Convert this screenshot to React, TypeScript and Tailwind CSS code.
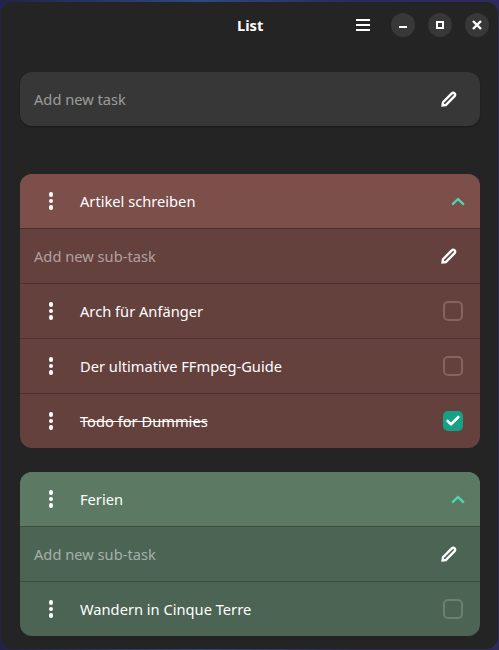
import { Check } from 'lucide-react';

const Dots = () => (
  <div className="flex w-[60px] shrink-0 flex-col items-center gap-[2px] pl-[2px]">
    <span className="h-[4.5px] w-[4.5px] rounded-full bg-white" />
    <span className="h-[4.5px] w-[4.5px] rounded-full bg-white" />
    <span className="h-[4.5px] w-[4.5px] rounded-full bg-white" />
  </div>
);

const Pencil = () => (
  <svg width="16" height="16" viewBox="0 0 16 16" className="text-white">
    <path d="M1.6 14.4 L2 11.2 L10.8 2.4 A1.9 1.9 0 0 1 13.6 5.2 L4.8 14 Z" fill="none" stroke="currentColor" strokeWidth="2.4" strokeLinejoin="miter" />
  </svg>
);

const Chevron = () => (
  <svg width="14" height="9" viewBox="0 0 14 9" className="text-[#4fd8b6]">
    <path d="M1.2 7.6 L7 2 L12.8 7.6" fill="none" stroke="currentColor" strokeWidth="2.2" />
  </svg>
);

const WinButton = ({ children }: { children: React.ReactNode }) => (
  <div className="flex h-6 w-6 items-center justify-center rounded-full bg-[#383838] text-white">{children}</div>
);

const AddRow = ({ border }: { border: string }) => (
  <div className={`flex h-[55px] items-center justify-between border-b pl-[14px] pr-[23px] ${border}`}>
    <span className="text-[14.67px] text-white/50">Add new sub-task</span>
    <Pencil />
  </div>
);

type Task = { title: string; done?: boolean };

const TaskRow = ({ task, border, box, last }: { task: Task; border: string; box: string; last: boolean }) => (
  <div className={last ? 'flex h-[54px] items-center pr-[17px]' : `flex h-[55px] items-center border-b pr-[17px] ${border}`}>
    <Dots />
    <span className={`flex-1 text-[14.67px] text-white ${task.done ? 'line-through' : ''}`}>{task.title}</span>
    {task.done ? (
      <div className="flex h-5 w-5 items-center justify-center rounded-[5px] bg-[#16a085]">
        <Check size={16} strokeWidth={4} className="text-white" />
      </div>
    ) : (
      <div className={`h-5 w-5 rounded-[5px] border-2 ${box}`} />
    )}
  </div>
);

const Group = ({ title, tasks, head, body, border, box }: { title: string; tasks: Task[]; head: string; body: string; border: string; box: string }) => (
  <section className={`overflow-hidden rounded-xl ${body}`}>
    <div className={`flex h-[55px] items-center border-b pr-[15px] ${head} ${border}`}>
      <Dots />
      <span className="flex-1 text-[14.67px] text-white">{title}</span>
      <Chevron />
    </div>
    <AddRow border={border} />
    {tasks.map((task, i) => (
      <TaskRow key={task.title} task={task} border={border} box={box} last={i === tasks.length - 1} />
    ))}
  </section>
);

export default function App() {
  return (
    <div className="h-[650px] w-[499px] overflow-hidden bg-[linear-gradient(90deg,#23224a_0%,#2a4a82_40%,#2b2a5c_70%,#2f2a5e_100%)] pl-[1px] pt-[2px] font-['Noto_Sans',sans-serif]">
      <div className="h-[647px] w-[497px] rounded-[12px] bg-[#242424]">
        <header className="flex h-[45px] items-center pl-[236px] pr-[9px]">
          <h1 className="flex-1 text-[14.67px] font-bold text-white">List</h1>
          <div className="mr-[21px] flex w-[14px] flex-col gap-[3px]">
            <span className="h-[2px] bg-white" />
            <span className="h-[2px] bg-white" />
            <span className="h-[2px] bg-white" />
          </div>
          <div className="flex gap-[13px]">
            <WinButton><span className="mt-[5px] h-[2px] w-2 bg-white" /></WinButton>
            <WinButton><span className="h-2 w-2 border-2 border-white" /></WinButton>
            <WinButton>
              <svg width="10" height="10" viewBox="0 0 10 10">
                <path d="M1 1 L9 9 M9 1 L1 9" stroke="currentColor" strokeWidth="2.4" />
              </svg>
            </WinButton>
          </div>
        </header>
        <main className="pl-[19px] pr-[18px] pt-[25px]">
          <div className="flex h-[54px] items-center justify-between rounded-xl bg-[#373737] pl-[14px] pr-[23px] shadow-[0_1px_2px_rgba(0,0,0,0.3)]">
            <span className="text-[14.67px] text-white/50">Add new task</span>
            <Pencil />
          </div>
          <div className="mt-[48px] flex flex-col gap-6">
            <Group
              title="Artikel schreiben"
              head="bg-[#7c4f4b]"
              body="bg-[#65413e]"
              border="border-[#4c3130]"
              box="border-[#85645f]"
              tasks={[
                { title: 'Arch für Anfänger' },
                { title: 'Der ultimative FFmpeg-Guide' },
                { title: 'Todo for Dummies', done: true },
              ]}
            />
            <Group
              title="Ferien"
              head="bg-[#5c7a63]"
              body="bg-[#4c6453]"
              border="border-[#3a4e40]"
              box="border-[#6b8070]"
              tasks={[{ title: 'Wandern in Cinque Terre' }]}
            />
          </div>
        </main>
      </div>
    </div>
  );
}
